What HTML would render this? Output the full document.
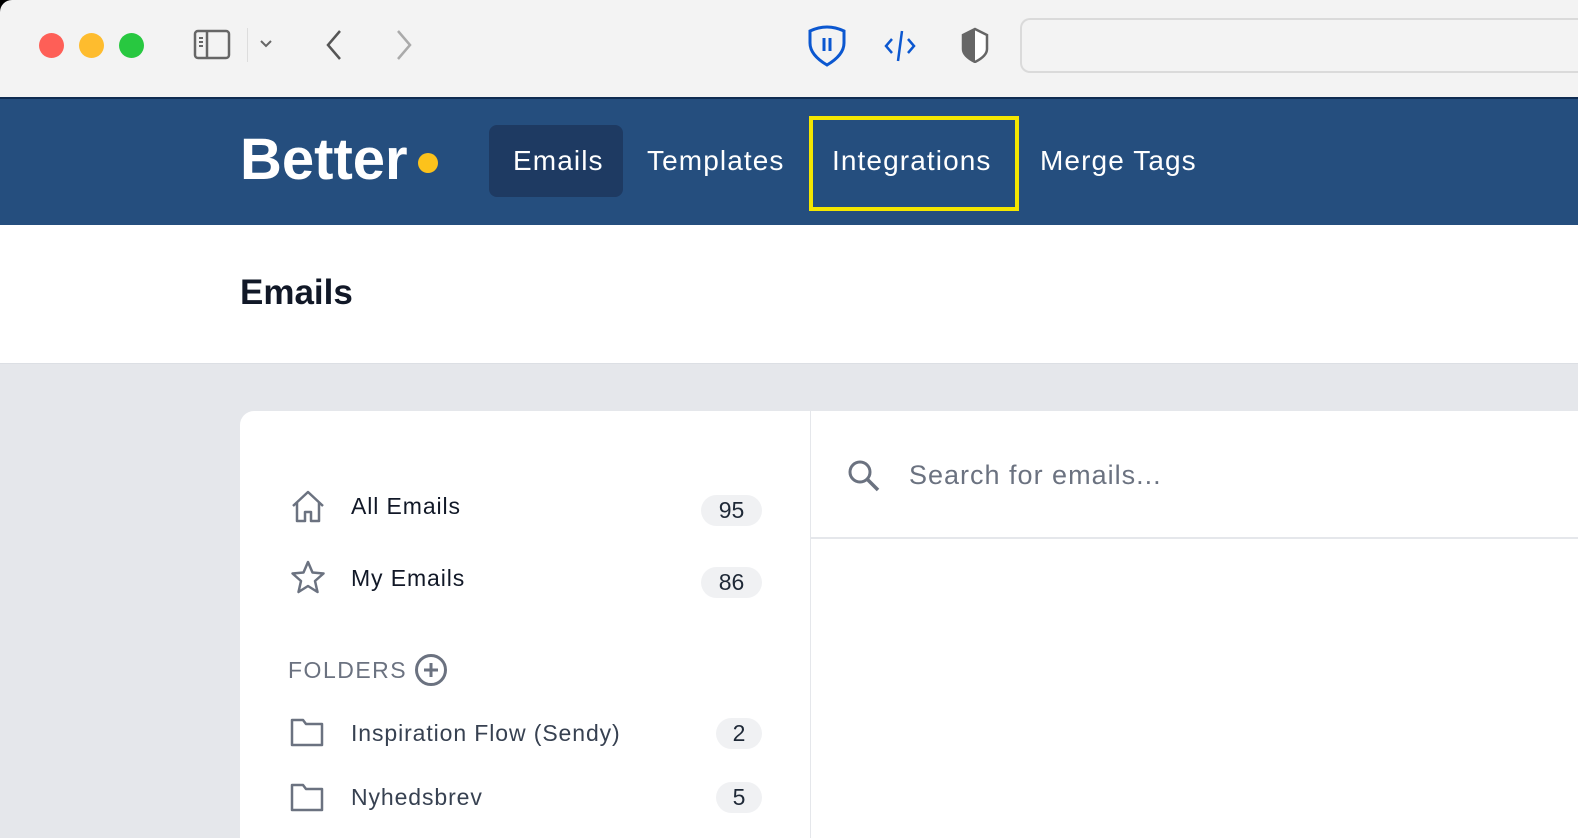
<!DOCTYPE html>
<html><head><meta charset="utf-8"><style>
*{margin:0;padding:0;box-sizing:border-box}
html{width:1578px;height:838px;overflow:hidden}
body{width:1578px;height:838px;overflow:hidden;background:#e5e7eb;font-family:"Liberation Sans",sans-serif;position:relative}
.corner{position:absolute;left:0;top:0;width:14px;height:14px;background:#000}
.chrome{position:absolute;left:0;top:0;width:1578px;height:97px;background:#f3f3f3;border-top-left-radius:12px;overflow:hidden}
.dot{position:absolute;top:33px;width:25px;height:25px;border-radius:50%}
.hdr{position:absolute;left:0;top:97px;width:1578px;height:128px;background:#254e7e;border-top:2px solid #0f2c52;overflow:hidden}
.nav{position:absolute;color:#fff;font-size:28px;top:46px;letter-spacing:1.1px}
.title{position:absolute;left:0;top:225px;width:1578px;height:139px;background:#fff;border-bottom:1px solid #dcdfe4}
.card{position:absolute;left:240px;top:411px;width:1338px;height:427px;background:#fff;border-radius:14px 0 0 0;overflow:hidden}
.item{position:absolute;font-size:23px;color:#111827;letter-spacing:0.9px}
.badge{position:absolute;background:#f0f1f3;border-radius:16px;height:31px;font-size:23px;color:#1f2937;text-align:center;line-height:31px}
svg{position:absolute}
</style></head><body>
<div class="corner"></div>
<div class="chrome">
 <div class="dot" style="left:39px;background:#fe5f57"></div>
 <div class="dot" style="left:79px;background:#febc2e"></div>
 <div class="dot" style="left:119px;background:#28c840"></div>
 <svg style="left:192px;top:28px" width="44" height="34" viewBox="0 0 44 34"><rect x="3" y="3" width="34" height="27" rx="3" fill="none" stroke="#666" stroke-width="2.5"/><line x1="15" y1="3" x2="15" y2="30" stroke="#666" stroke-width="2.5"/><path d="M7 10h4M7 14h4M7 18h4" stroke="#666" stroke-width="2"/></svg>
 <div style="position:absolute;left:247px;top:28px;width:1px;height:34px;background:#ddd"></div>
 <svg style="left:258px;top:38px" width="16" height="12"><path d="M3 3l5 5 5-5" fill="none" stroke="#666" stroke-width="2"/></svg>
 <svg style="left:320px;top:28px" width="28" height="34"><path d="M20 3L8 17l12 14" fill="none" stroke="#555" stroke-width="2.5"/></svg>
 <svg style="left:390px;top:28px" width="28" height="34"><path d="M8 3l12 14L8 31" fill="none" stroke="#aaa" stroke-width="2.5"/></svg>
 <svg style="left:805px;top:25px" width="44" height="42" viewBox="0 0 44 42"><path d="M5 6q17-8 34 0v12q0 12-17 22Q5 30 5 18z" fill="none" stroke="#0b57d0" stroke-width="3"/><path d="M19 13v13M25 13v13" stroke="#0b57d0" stroke-width="3"/></svg>
 <svg style="left:882px;top:29px" width="36" height="34"><path d="M10 10l-6 7 6 7M26 10l6 7-6 7M20 2l-4 30" fill="none" stroke="#0b57d0" stroke-width="2.5"/></svg>
 <svg style="left:958px;top:27px" width="34" height="36"><path d="M17 2L5 8v14q0 7 12 13 12-6 12-13V8z" fill="#fff" stroke="#666" stroke-width="2.5"/><path d="M17 2L5 8v14q0 7 12 13z" fill="#666"/></svg>
 <div style="position:absolute;left:1020px;top:18px;width:558px;height:55px;border:2px solid #dadada;border-right:none;border-radius:10px 0 0 10px"></div>
</div>
<div class="hdr">
 <div style="position:absolute;left:240px;top:27px;color:#fff;font-size:58px;font-weight:bold;letter-spacing:0px">Better</div>
 <div style="position:absolute;left:418px;top:54px;width:20px;height:20px;border-radius:50%;background:#fcc21b"></div>
 <div style="position:absolute;left:489px;top:26px;width:134px;height:72px;background:#1e3a62;border-radius:8px"></div>
 <div class="nav" style="left:513px">Emails</div>
 <div class="nav" style="left:647px">Templates</div>
 <div style="position:absolute;left:809px;top:17px;width:210px;height:95px;border:4px solid #f4e600"></div>
 <div class="nav" style="left:832px">Integrations</div>
 <div class="nav" style="left:1040px">Merge Tags</div>
</div>
<div class="title"><div style="position:absolute;left:240px;top:48px;font-size:35px;font-weight:bold;color:#111827">Emails</div></div>
<div class="card">
 <div style="position:absolute;left:570px;top:0;width:1px;height:427px;background:#e5e7eb"></div>
 <div style="position:absolute;left:571px;top:126px;width:767px;height:2px;background:#e5e7eb"></div>
 <svg style="left:606px;top:47px" width="36" height="36"><circle cx="14" cy="14" r="10" fill="none" stroke="#6b7280" stroke-width="3"/><path d="M21 21l11 11" stroke="#6b7280" stroke-width="3.5"/></svg>
 <div style="position:absolute;left:669px;top:49px;font-size:27px;color:#6b7280;letter-spacing:1px">Search for emails...</div>
 <svg style="left:50px;top:78px" width="36" height="36"><path d="M3 17L18 3l15 14M7 13v19h8v-9h6v9h8V13" fill="none" stroke="#6b7280" stroke-width="2.5" stroke-linejoin="round"/></svg>
 <div class="item" style="left:111px;top:82px">All Emails</div>
 <div class="badge" style="left:461px;top:84px;width:61px">95</div>
 <svg style="left:50px;top:149px" width="36" height="36"><path d="M18 2l4.5 10.5 11 1-8.5 7.5 2.5 11L18 26l-9.5 6 2.5-11L2.5 13.5l11-1z" fill="none" stroke="#6b7280" stroke-width="2.5" stroke-linejoin="round"/></svg>
 <div class="item" style="left:111px;top:154px">My Emails</div>
 <div class="badge" style="left:461px;top:156px;width:61px">86</div>
 <div style="position:absolute;left:48px;top:246px;font-size:23px;color:#6b7280;letter-spacing:1.5px">FOLDERS</div>
 <svg style="left:174px;top:242px" width="36" height="36"><circle cx="17" cy="17" r="14.5" fill="none" stroke="#6b7280" stroke-width="3"/><path d="M17 10v14M10 17h14" stroke="#6b7280" stroke-width="3"/></svg>
 <svg style="left:50px;top:305px" width="36" height="32"><path d="M2 4h11l3 4h16v21H2z" fill="none" stroke="#6b7280" stroke-width="2.5" stroke-linejoin="round"/></svg>
 <div class="item" style="left:111px;top:309px;color:#374151">Inspiration Flow (Sendy)</div>
 <div class="badge" style="left:476px;top:307px;width:46px">2</div>
 <svg style="left:50px;top:370px" width="36" height="32"><path d="M2 4h11l3 4h16v21H2z" fill="none" stroke="#6b7280" stroke-width="2.5" stroke-linejoin="round"/></svg>
 <div class="item" style="left:111px;top:373px;color:#374151">Nyhedsbrev</div>
 <div class="badge" style="left:476px;top:371px;width:46px">5</div>
</div>
</body></html>
